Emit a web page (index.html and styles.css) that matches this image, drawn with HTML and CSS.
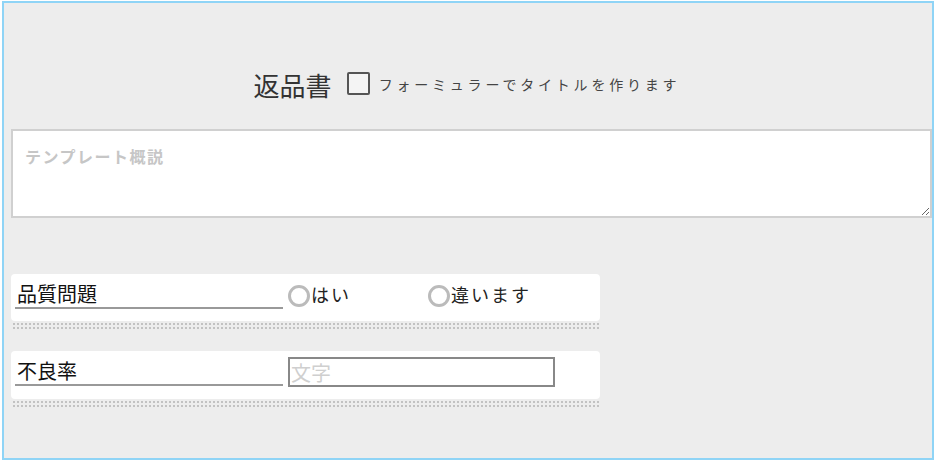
FILE: index.html
```html
<!DOCTYPE html>
<html>
<head>
  <meta charset="utf-8">
  <title>返品書</title>
  <link rel="stylesheet" href="styles.css">
</head>
<body>
  <div class="frame">
    <div class="title-line">
      <span class="title">返品書</span>
      <span class="check-box"></span>
      <span class="check-label">フォーミュラーでタイトルを作ります</span>
    </div>

    <textarea class="summary" placeholder="テンプレート概説"></textarea>

    <div class="field">
      <div class="field-row">
        <div class="field-label">品質問題</div>
        <div class="radio-group">
          <span class="radio"></span><span class="radio-text">はい</span>
        </div>
        <div class="radio-group">
          <span class="radio"></span><span class="radio-text">違います</span>
        </div>
      </div>
      <div class="dots"></div>
    </div>

    <div class="field">
      <div class="field-row">
        <div class="field-label">不良率</div>
        <input class="text-input" type="text" placeholder="文字">
      </div>
      <div class="dots"></div>
    </div>
  </div>
</body>
</html>
```

FILE: styles.css
```css
* {
  margin: 0;
  padding: 0;
  box-sizing: border-box;
}

body {
  font-family: "Noto Sans CJK JP", "Noto Sans", sans-serif;
  background: #ffffff;
  width: 935px;
  height: 461px;
  padding: 1px 1px 1px 2px;
}

.frame {
  height: 459px;
  border: 2px solid #8fd4f6;
  background: #ededed;
  padding: 64px 0 0 7px;
}

.title-line {
  display: flex;
  align-items: center;
  justify-content: center;
  height: 36px;
  padding-right: 9px;
}

.title {
  font-size: 26px;
  color: #333;
  line-height: 36px;
  margin-right: 15px;
}

.check-box {
  width: 23px;
  height: 23px;
  border: 2px solid #555;
  border-radius: 2px;
  background: #f4f4f4;
  margin-right: 9px;
  margin-top: -4px;
}

.check-label {
  font-size: 14px;
  letter-spacing: 3.8px;
  color: #444;
  margin-top: -2px;
}

.summary {
  display: block;
  width: 921px;
  height: 89px;
  margin-top: 26px;
  border: 2px solid #d0d0d0;
  background: #fff;
  padding: 13px 12px;
  resize: vertical;
  font-family: inherit;
  font-size: 16px;
  outline: none;
}

.summary::placeholder {
  color: #c6c6c6;
  font-weight: bold;
  letter-spacing: 1.5px;
}

.field {
  width: 589px;
  margin-top: 56px;
}

.field + .field {
  margin-top: 22px;
}

.field-row {
  display: flex;
  align-items: flex-start;
  background: #fff;
  border-radius: 4px;
  padding: 6px 4px 12px 4px;
}

.field-label {
  width: 268px;
  font-size: 20px;
  line-height: 27px;
  color: #111;
  padding-left: 2px;
  border-bottom: 2px solid #999;
  margin-right: 5px;
}

.radio-group {
  display: flex;
  align-items: flex-start;
  width: 140px;
  padding-top: 4px;
}

.radio {
  width: 22px;
  height: 22px;
  border: 3px solid #bbb;
  border-radius: 50%;
  margin-top: 1px;
}

.radio-text {
  font-size: 18px;
  line-height: 20px;
  letter-spacing: 2px;
  color: #222;
  margin-left: 1px;
}

.text-input {
  width: 267px;
  height: 30px;
  border: 2px solid #888;
  background: #fff;
  font-family: inherit;
  font-size: 20px;
  padding: 0 1px;
  outline: none;
}

.text-input::placeholder {
  color: #cfcfcf;
}

.dots {
  height: 6px;
  margin-top: 2px;
  background-image: conic-gradient(from 90deg at 2px 2px, transparent 75%, #c2c2c2 0);
  background-size: 4px 4px;
}
```
